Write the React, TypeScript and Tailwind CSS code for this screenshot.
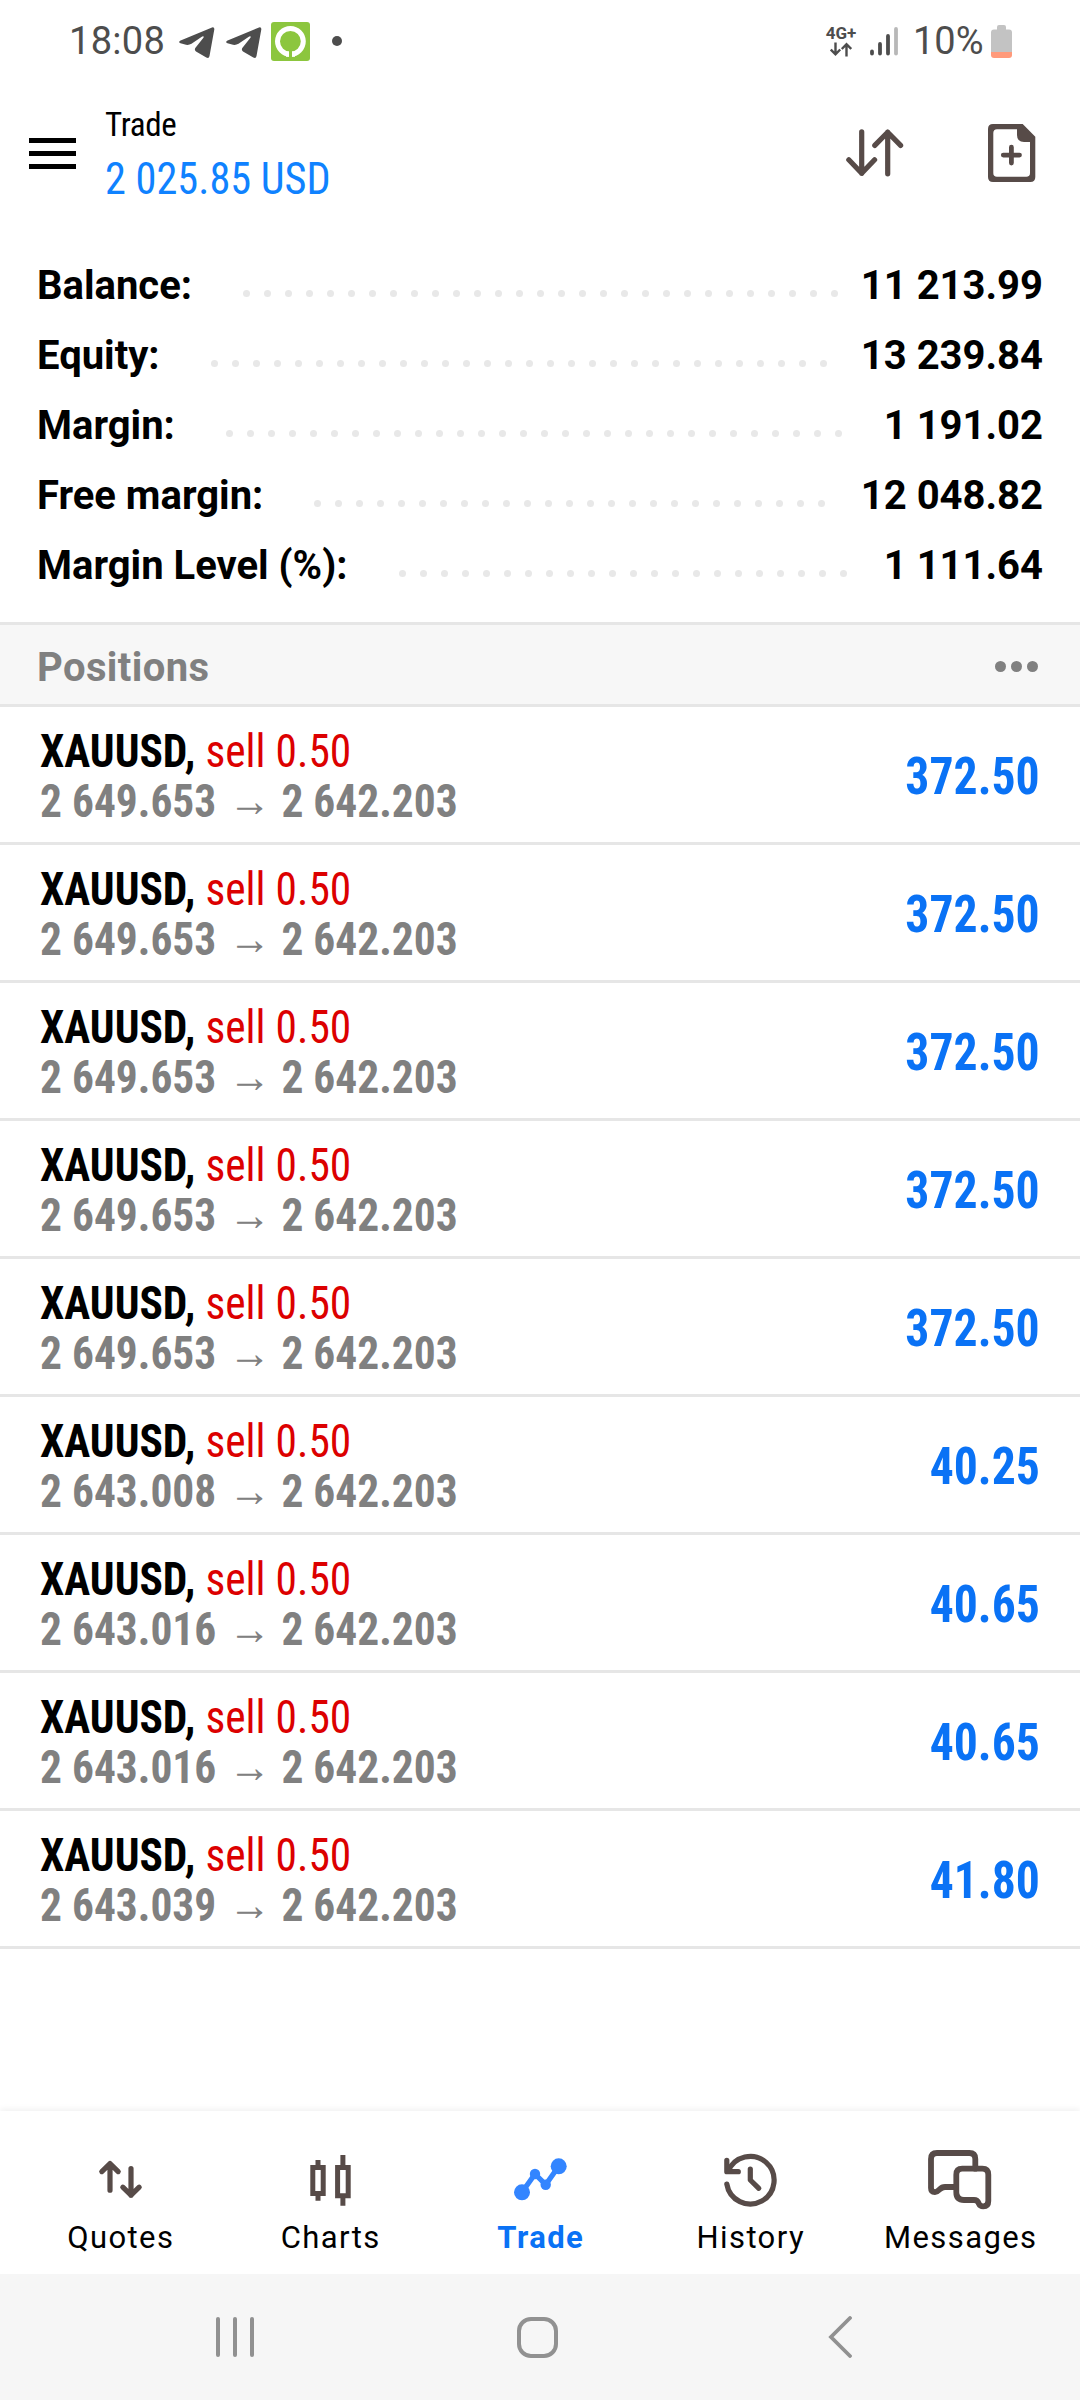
import React from 'react';

interface SummaryItem {
  label: string;
  value: string;
  dots: number;
}

interface Position {
  open: string;
  current: string;
  profit: string;
}

const summary: SummaryItem[] = [
  { label: 'Balance:', value: '11 213.99', dots: 29 },
  { label: 'Equity:', value: '13 239.84', dots: 30 },
  { label: 'Margin:', value: '1 191.02', dots: 30 },
  { label: 'Free margin:', value: '12 048.82', dots: 25 },
  { label: 'Margin Level (%):', value: '1 111.64', dots: 22 },
];

const positions: Position[] = [
  { open: '2 649.653', current: '2 642.203', profit: '372.50' },
  { open: '2 649.653', current: '2 642.203', profit: '372.50' },
  { open: '2 649.653', current: '2 642.203', profit: '372.50' },
  { open: '2 649.653', current: '2 642.203', profit: '372.50' },
  { open: '2 649.653', current: '2 642.203', profit: '372.50' },
  { open: '2 643.008', current: '2 642.203', profit: '40.25' },
  { open: '2 643.016', current: '2 642.203', profit: '40.65' },
  { open: '2 643.016', current: '2 642.203', profit: '40.65' },
  { open: '2 643.039', current: '2 642.203', profit: '41.80' },
];

const TelegramIcon = () => (
  <svg className="h-8 w-9" viewBox="0 0 36 32" fill="#4d4d4d">
    <path d="M1 13.8 33 .4Q35.6-.2 35.3 2.5L30.5 29Q30 31.8 27.3 30.5L17 24.5Q15 22.8 16.5 20.8L24.6 10.4Q25 8.6 23.2 9.6L12.5 16.8Q9.8 18.4 7 17.8L1.5 16.3Q-.9 15.3 1 13.8Z" />
  </svg>
);

const StatusBar = () => (
  <div className="flex h-[82px] items-center justify-between pl-[69px] pr-[68px] text-[#4d4d4d]">
    <div className="flex items-center">
      <span className="w-[110px] whitespace-nowrap text-[38px] leading-none tracking-[0.3px]">18:08</span>
      <div className="mt-1 flex gap-[11px]">
        <TelegramIcon />
        <TelegramIcon />
      </div>
      <svg className="ml-[9px] h-[39px] w-[39px]" viewBox="0 0 39 39">
        <rect width="39" height="39" rx="3" fill="#8cc63e" />
        <circle cx="19.4" cy="19.3" r="12.9" fill="none" stroke="#fff" strokeWidth="5" />
        <path d="M15 29.5h9v5.3h-9z" fill="#fff" />
        <path d="M18 28h3v8h-3z" fill="#8cc63e" />
      </svg>
      <span className="ml-[22px] h-2.5 w-2.5 rounded-full bg-[#4d4d4d]" />
    </div>
    <div className="flex items-center">
      <div className="flex w-8 flex-col items-center">
        <span className="text-[17px] font-bold leading-[17px]">4G+</span>
        <svg className="h-[15px] w-[22px]" viewBox="0 0 22 15" fill="none" stroke="#4d4d4d" strokeWidth="2.4">
          <path d="M5.5.5V12M.8 7.5 5.5 12.3 10.2 7.5M16.5 14.5V2.5M11.8 7 16.5 2.2 21.2 7" />
        </svg>
      </div>
      <svg className="ml-[13px] h-[30px] w-7" viewBox="0 0 28 30" strokeWidth="3.8" strokeLinecap="round" stroke="#4d4d4d">
        <path d="M2 25.5V27.5M10 18V27.5M18 10V27.5" />
        <path d="M26 3V27.5" stroke="#b8b8b8" />
      </svg>
      <span className="ml-[15px] w-[78px] whitespace-nowrap text-[38px] leading-none">10%</span>
      <svg className="h-[33px] w-[21px]" viewBox="0 0 21 33">
        <path d="M6 2q0-2 2-2h5q2 0 2 2v2.5h3q3 0 3 3V27H0V7.5q0-3 3-3h3z" fill="#c3c3c3" />
        <path d="M0 27h21v3q0 3-3 3H3q-3 0-3-3z" fill="#ff9a7b" />
      </svg>
    </div>
  </div>
);

const Header = () => (
  <header className="flex h-[142px] items-center pl-[29px] pr-[44px]">
    <div className="flex w-[47px] flex-col gap-2">
      <span className="h-[5px] bg-black" />
      <span className="h-[5px] bg-black" />
      <span className="h-[5px] bg-black" />
    </div>
    <div className="ml-[29px] flex flex-1 flex-col pt-[3px] font-['Roboto_Condensed','Roboto'] font-stretch-condensed">
      <span className="text-[33px] leading-[48px] tracking-[-0.3px]">Trade</span>
      <span className="origin-left scale-x-[0.94] text-[45px] leading-[60px] text-[#0f82ff]">2 025.85 USD</span>
    </div>
    <svg
      className="h-12 w-[58px]"
      viewBox="0 0 58 48"
      fill="none"
      stroke="#574b48"
      strokeWidth="5.2"
      strokeLinecap="round"
      strokeLinejoin="round"
    >
      <path d="M15.7 2.8V44.3M2.8 30.8 15.7 44.3 28.6 30.8M41.7 44.8V3.2M28.8 16.4 41.7 3.2 54.6 16.4" />
    </svg>
    <svg className="ml-[84px] h-[58px] w-[48px]" viewBox="0 0 48 58" fill="#574b48">
      <path
        fillRule="evenodd"
        d="M5 0H34.7L47.3 12.7V53q0 5-5 5H5q-5 0-5-5V5Q0 0 5 0ZM9 5.2Q5.3 5.2 5.3 9V49q0 3.8 3.7 3.8H38.3Q42 52.8 42 49V18H36Q29 18 29 11V5.2Z"
      />
      <path d="M23.4 23.2V39M15.3 31.1H31.5" stroke="#574b48" strokeWidth="4.8" strokeLinecap="round" />
    </svg>
  </header>
);

const SummaryRow = ({ label, value, dots }: SummaryItem) => (
  <div className="flex h-[70px] items-center justify-between">
    <div className="flex items-center">
      <span>{label}</span>
      <div className="ml-[51px] mt-[15px] flex gap-3.5">
        {Array.from({ length: dots }).map((_, i) => (
          <span key={i} className="h-[7px] w-[7px] rounded-full bg-[#e8e8e8]" />
        ))}
      </div>
    </div>
    <span>{value}</span>
  </div>
);

const PositionRow = ({ open, current, profit }: Position) => (
  <div className="flex h-[138px] items-center justify-between border-b-[3px] border-[#e6e6e6] px-10 font-['Roboto_Condensed','Roboto'] font-stretch-condensed">
    <div className="origin-left scale-x-[0.944] whitespace-nowrap pt-0.5 text-[46px] leading-[50px]">
      <p>
        <span className="font-bold">XAUUSD,</span> <span className="text-[#dc0000]">sell 0.50</span>
      </p>
      <p className="flex font-bold text-[#808080]">
        {open}
        <span className="mx-[13px] w-[43px] text-center font-['Liberation_Sans'] text-[45px] font-normal">→</span>
        {current}
      </p>
    </div>
    <span className="origin-right scale-x-[0.935] pt-[5px] text-[51px] font-bold text-[#0a72f5]">{profit}</span>
  </div>
);

const NavItem = ({ label, active, children }: { label: string; active?: boolean; children: React.ReactNode }) => (
  <div className="flex flex-1 flex-col items-center pt-9">
    <svg
      className="h-16 w-16"
      viewBox="0 0 64 64"
      fill="none"
      stroke={active ? '#3385ff' : '#574b48'}
      strokeWidth="5.2"
      strokeLinecap="round"
      strokeLinejoin="round"
    >
      {children}
    </svg>
    <span
      className={`mt-[7px] pl-[1.5px] text-[31px] leading-10 tracking-[1.4px] ${active ? 'font-bold text-[#0a72f5]' : 'text-black'}`}
    >
      {label}
    </span>
  </div>
);

const BottomNav = () => (
  <nav className="flex h-[163px] bg-white px-[15px] shadow-[0_-2px_6px_rgba(0,0,0,0.06)]">
    <NavItem label="Quotes">
      <path d="M22 43.2V16.6M13.8 24.6 22 16.6 30.2 24.6M43 21.6V48.2M34.8 40.2 43 48.2 51.2 40.2" />
    </NavItem>
    <NavItem label="Charts">
      <g strokeLinecap="butt" strokeLinejoin="miter" strokeWidth="5">
        <path d="M14.8 20.5H25.2V46.5H14.8ZM20 13V19M20 48V53.7" />
        <path d="M39.6 20.5H50.2V48.8H39.6ZM44.9 8V19M44.9 50V58.7" />
      </g>
    </NavItem>
    <NavItem label="Trade" active>
      <path d="M14 45.3 27 27 37.7 37.7 50.7 19.3" />
      <g fill="#3385ff" stroke="none">
        <circle cx="14" cy="45.3" r="8" />
        <circle cx="27" cy="27" r="5.2" />
        <circle cx="37.7" cy="37.7" r="5.2" />
        <circle cx="50.7" cy="19.3" r="8" />
      </g>
    </NavItem>
    <NavItem label="History">
      <path d="M8.8 37A23.8 23.8 0 1 0 10.2 24.4" />
      <path d="M8.8 13.3V24.7H20.3M32.3 22V33L40.8 41.3" />
    </NavItem>
    <NavItem label="Messages">
      <g strokeWidth="5.8">
        <path d="M47.3 21.7V12q0-6-6-6H9q-6 0-6 6V41q0 4 4 4.2 2 0 4.5-2.6Q14 40 17 40H26" />
        <path d="M34.3 21.7H54.3q6 0 6 6V54q0 5.3-5 5.3-3.3 0-4.6-3Q49.4 53 46 53H36q-7.7 0-7.7-7.7V27.7q0-6 6-6Z" />
      </g>
    </NavItem>
  </nav>
);

const SystemBar = () => (
  <div className="flex h-[126px] items-center bg-[#f6f6f6] pl-[216px]">
    <div className="flex h-10 w-[38px] justify-between">
      <span className="w-1 rounded-full bg-[#919191]" />
      <span className="w-1 rounded-full bg-[#919191]" />
      <span className="w-1 rounded-full bg-[#919191]" />
    </div>
    <div className="ml-[263px] h-[41px] w-[41px] rounded-[14px] border-4 border-[#919191]" />
    <svg
      className="ml-[270px] h-[42px] w-6"
      viewBox="0 0 24 42"
      fill="none"
      stroke="#919191"
      strokeWidth="3.8"
      strokeLinecap="round"
    >
      <path d="M22 2 3 21 22 40" />
    </svg>
  </div>
);

export default function App() {
  return (
    <div className="flex h-[2400px] w-[1080px] flex-col bg-white font-['Roboto',sans-serif] text-black">
      <StatusBar />
      <Header />
      <section className="px-[37px] pb-[21px] pt-[27px] text-[40px] font-bold leading-none">
        {summary.map((item) => (
          <SummaryRow key={item.label} {...item} />
        ))}
      </section>
      <div className="flex h-[85px] items-center justify-between border-y-[3px] border-[#e6e6e6] bg-[#f7f7f7] pl-[37px] pr-[42px] pt-[7px]">
        <span className="text-[40px] font-bold tracking-[0.4px] text-[#808080]">Positions</span>
        <div className="mb-1 flex gap-[5px]">
          <span className="h-[11px] w-[11px] rounded-full bg-[#808080]" />
          <span className="h-[11px] w-[11px] rounded-full bg-[#808080]" />
          <span className="h-[11px] w-[11px] rounded-full bg-[#808080]" />
        </div>
      </div>
      <main className="flex-1">
        {positions.map((position, index) => (
          <PositionRow key={index} {...position} />
        ))}
      </main>
      <BottomNav />
      <SystemBar />
    </div>
  );
}
